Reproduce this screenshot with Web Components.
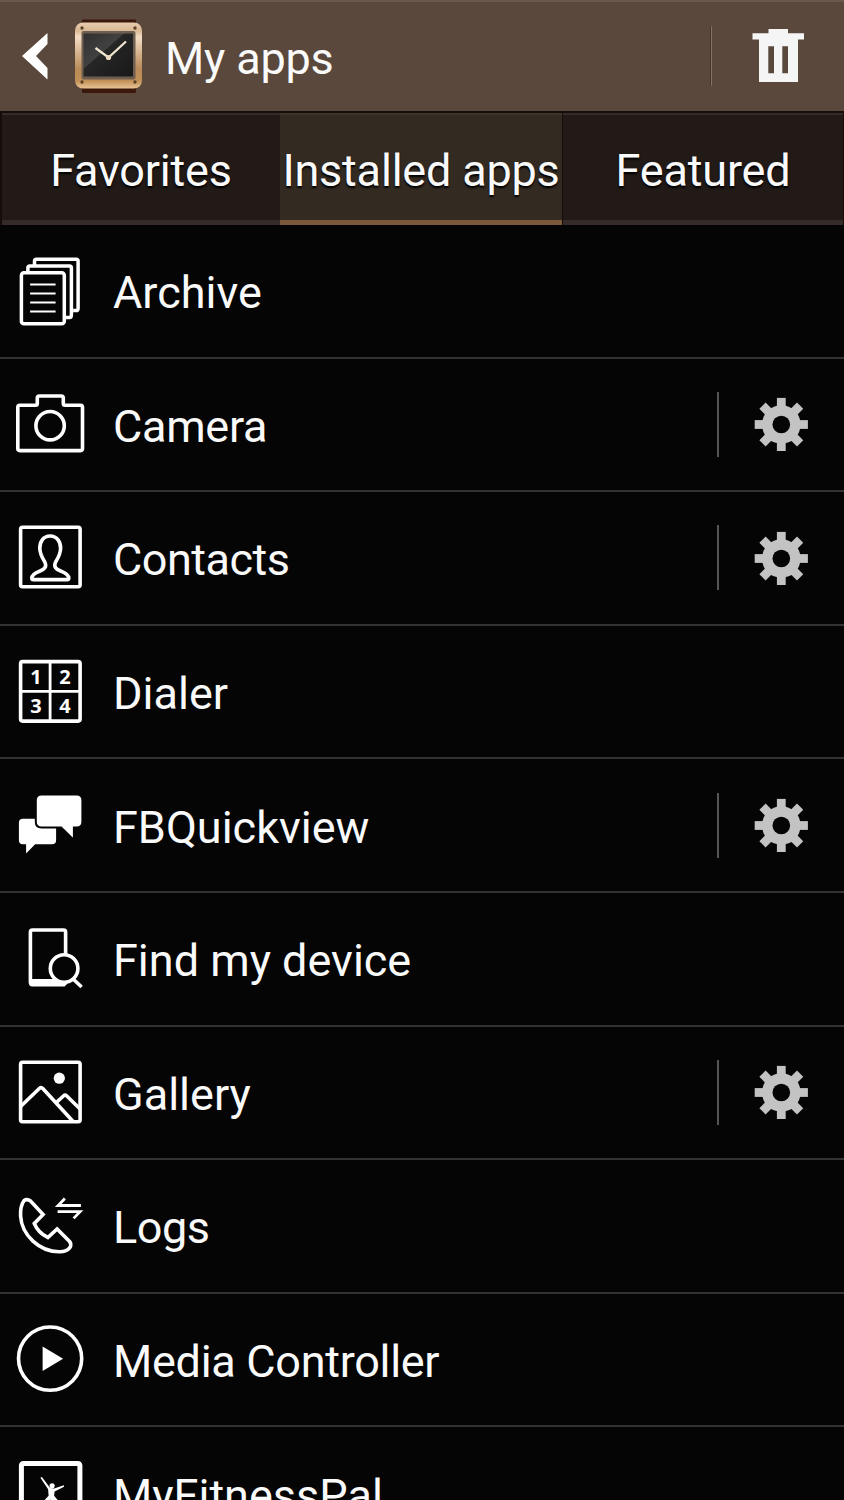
<!DOCTYPE html>
<html lang="en">
<head>
<meta charset="utf-8">
<title>My apps</title>
<style>
html, body {
    margin: 0;
    height: 1500px;
    overflow: hidden;
    background: #050505;
}
</style>
</head>
<body>
<my-apps></my-apps>

<script>
// every icon is drawn on the 100x134 cell at the start of its row
const ICONS = {
    archive: `
        <g stroke-width="3.500">
            <path d="M34.900 43v-5.800q0-2 2-2h39.600q2 0 2 2v47q0 2.400-2 2.400h-3"/>
            <path d="M28.300 50v-6q0-2 2-2h39.500q2 0 2 2v47q0 2.500-2 2.500h-4"/>
            <rect x="21.800" y="48.800" width="42.900" height="51" rx="2.500"/>
        </g>
        <path stroke-width="2" d="M30.500 60.500H56M30.500 69.500H56M30.500 78.500H56M30.500 87.500H56"/>`,
    camera: `
        <path d="M20.200 47.200H36q1.700 0 1.700-1.700v-5.500q0-2 2-2h22q2 0 2 2v5.500q0 1.700 1.700 1.700h15.500q2 0 2 2v41.400q0 2-2 2H20.200q-2 0-2-2V49.200q0-2 2-2z"/>
        <circle cx="50.500" cy="67.700" r="14.200"/>`,
    contacts: `
        <rect x="21" y="36.300" width="59.500" height="59.500" rx="2"/>
        <path d="M50.500 45c-7 0-10.500 6-10.300 12.500.200 6 2.700 9.500 5 13.500 2.500 5-.700 7.500-4.700 9-4 1.500-8.500 3.500-8.300 7.300q.100 1.300 1.500 1.300h34q1.500 0 1.500-1.300c0-3.800-4.200-5.800-8.200-7.300-4-1.500-7.500-4-5-9 2.300-4 4.800-7.500 5-13.500C61.200 51 57.500 45 50.500 45z"/>`,
    dialer: `
        <rect x="21" y="36.600" width="59.500" height="59.500" rx="2"/>
        <path stroke-width="2.800" d="M50.500 37v59M21 66.300h59"/>
        <g class="digits">
            <text x="36.500" y="59">1</text>
            <text x="65.500" y="59">2</text>
            <text x="36.500" y="88.500">3</text>
            <text x="65.500" y="88.500">4</text>
        </g>`,
    chat: `
        <g fill="#fff" stroke="none">
            <path d="M23.300 60.800h29.200q4 0 4 4v17.400q0 4-4 4H35.500l-9 9.200v-9.200h-3.200q-4 0-4-4V64.800q0-4 4-4z"/>
            <path stroke="#050505" stroke-width="2" d="M42 36.500h35q5.800 0 5.800 5.800v21.500q0 5.800-5.800 5.800h-2.700V82L61.500 69.600H42q-5.800 0-5.800-5.800V42.300q0-5.800 5.800-5.800z"/>
        </g>`,
    find: `
        <rect x="30.800" y="38" width="35.200" height="54" rx="2"/>
        <path fill="#fff" stroke="none" d="M29.500 87H68v3l-3 4.500H32.500q-3 0-3-3z"/>
        <circle fill="#050505" cx="64.500" cy="76.500" r="13.800"/>
        <path stroke-width="3.600" d="M73.500 87l8.500 8"/>`,
    gallery: `
        <rect x="21" y="36.300" width="59.500" height="59.500" rx="2"/>
        <circle fill="#fff" stroke="none" cx="59.700" cy="52.200" r="5.600"/>
        <path d="M21 80.500l18.700-18q1.800-1.700 3.500.1L73.500 95.500M57.300 76l6.500-6q1.700-1.600 3.400 0L80.500 83"/>`,
    logs: `
        <path d="M24.500 41.500q3-2 6.500.5L43.500 55.500 34.700 64.500q4 9.500 13.500 14L57.500 70 70 82.500q2.500 3 0 6.500-4 4-10 3.800C40 93 22 76 21 57q-.5-10 3.500-15.500z"/>
        <path stroke-width="2.800" d="M81.300 46.500H58.500l6.800-7M58 52.600H80.500l-6.500 6.800"/>`,
    media: `
        <circle cx="50.500" cy="65.600" r="31.600"/>
        <path fill="#fff" stroke="none" d="M43 53.500l20.500 12.200L43 78z"/>`,
    fitness: `
        <rect x="21.800" y="37.500" width="58.500" height="58.500" rx="2" stroke-width="5"/>
        <circle fill="#fff" stroke="none" cx="52.500" cy="59.800" r="2.600"/>
        <path fill="#fff" stroke="none" d="M42.300 51l8.200 11 4 .5 9.700-3.200.3 1.500-9.500 4.700-.500 4.200 5 6-9-2-7 2 5.500-6-.500-6.500-7.700-11.500z"/>`,
}

// tooth boxes rotated around the hub
const GEAR = [0, 45, 90, 135].map(a =>
    `<rect x="-4.400" y="-26.600" width="8.800" height="53.200" transform="rotate(${a})"/>`
).join('')

class AppHeader extends HTMLElement {
    constructor() {
        super()
        this.attachShadow({ mode: 'open' })
    }

    connectedCallback() {
        this.shadowRoot.innerHTML = /* html */ `
            <svg class="back" width="76" height="111" viewBox="0 0 76 111">
                <path d="M47.500 33v11L36 56l11.500 12v11.500L22 56z" fill="#fff"/>
            </svg>
            <svg class="watch" width="68" height="76" viewBox="75 19 68 76">
                <defs>
                    <linearGradient id="gold" x2="0" y2="1">
                        <stop offset="0" stop-color="#e9cdb0"/>
                        <stop offset=".12" stop-color="#d9b893"/>
                        <stop offset=".22" stop-color="#f3dcc5"/>
                        <stop offset=".7" stop-color="#b98b59"/>
                        <stop offset=".88" stop-color="#c19057"/>
                        <stop offset="1" stop-color="#e8c396"/>
                    </linearGradient>
                    <linearGradient id="face" x2="1" y2="1">
                        <stop offset="0" stop-color="#303030"/>
                        <stop offset=".4" stop-color="#414141"/>
                        <stop offset=".42" stop-color="#262626"/>
                        <stop offset="1" stop-color="#181818"/>
                    </linearGradient>
                </defs>
                <rect x="82" y="20.500" width="54" height="73.500" rx="1" fill="#3b180c"/>
                <rect x="75" y="23.500" width="67" height="66" rx="8" fill="url(#gold)"/>
                <rect x="81.500" y="32" width="54" height="48.500" rx="2" fill="#6e5e50"/>
                <rect x="83.500" y="34.500" width="49.500" height="43" rx="1" fill="url(#face)"/>
                <g fill="#5b4128">
                    <circle cx="82" cy="29" r="1.700"/><circle cx="135" cy="29" r="1.700"/>
                    <circle cx="82" cy="83" r="1.700"/><circle cx="135" cy="83" r="1.700"/>
                </g>
                <path d="M95.500 49l13 9.500L126 42.500" fill="none" stroke="#f1e6d1" stroke-width="2.300"/>
                <circle cx="108.500" cy="58.500" r="2.600" fill="#e8d8bf"/>
            </svg>
            <h1><slot></slot></h1>
            <i></i>
            <svg width="132" height="111" viewBox="712 0 132 111">
                <path fill="#f5f5f5" fill-rule="evenodd" d="M768.500 29H788v4.300h16v6.200h-6V82h-39V39.500h-6.500v-6.200h16zM768.300 46.300v27h5.700v-27zM782.300 46.300v27h5.700v-27z"/>
            </svg>
            <style>
            :host {
                display: flex;
                box-sizing: border-box;
                height: 111px;
                align-items: center;
                background: linear-gradient(#6c594c 2px, #5a483c 2px);
            }

            svg {
                display: block;
                flex: none;
            }

            .back {
                margin-right: -1px;
            }

            h1 {
                flex: 1;
                margin: 5px 0 0 22px;
                font-size: 45px;
                font-weight: 400;
                line-height: 53px;
                letter-spacing: -0.2px;
            }

            i {
                width: 1px;
                height: 60px;
                background: #83756a;
                box-shadow: -1px 0 #483529;
            }
            </style>
        `
    }
}

class AppTab extends HTMLElement {
    constructor() {
        super()
        this.attachShadow({ mode: 'open' })
    }

    connectedCallback() {
        this.shadowRoot.innerHTML = /* html */ `
            <span><slot></slot></span>
            <style>
            :host {
                display: flex;
                box-sizing: border-box;
                justify-content: center;
                border-top: 2px solid #342b28;
                border-bottom: 5px solid #352c29;
                background: #211a17;
                font-size: 45px;
                line-height: 53px;
                letter-spacing: -0.2px;
                text-shadow: 0 2px 2px #000;
            }

            :host([selected]) {
                margin-right: 1px;
                border-top-color: #3d342a;
                border-bottom-color: #7b5a3a;
                background: #332a22;
            }

            span {
                margin-top: 29px;
                white-space: nowrap;
            }
            </style>
        `
    }
}

class AppRow extends HTMLElement {
    constructor() {
        super()
        this.attachShadow({ mode: 'open' })
    }

    connectedCallback() {
        const settings = this.hasAttribute('settings') ? `
            <i></i>
            <svg width="125" height="54" viewBox="-62.300 -27.500 125 54">
                <g fill="#c3c3c3">${GEAR}<circle r="19.300"/></g>
                <circle r="8.800" fill="#050505"/>
            </svg>` : ''

        this.shadowRoot.innerHTML = /* html */ `
            <svg class="icon" width="100" height="133.600" viewBox="0.400 1 100 133.600">${ICONS[this.getAttribute('icon')]}</svg>
            <span><slot></slot></span>
            ${settings}
            <style>
            :host {
                display: flex;
                box-sizing: border-box;
                height: 133.6px;
                align-items: center;
                border-bottom: 2px solid #333;
                font-size: 45px;
                line-height: 53px;
            }

            svg {
                display: block;
                flex: none;
            }

            .icon {
                align-self: flex-start;
                fill: none;
                stroke: #fff;
                stroke-width: 3.6;
            }

            .digits {
                fill: #fff;
                stroke: none;
                font: bold 20px "Noto Sans", sans-serif;
                text-anchor: middle;
            }

            span {
                flex: 1;
                margin: 4px 0 0 13px;
                white-space: nowrap;
            }

            i {
                width: 2px;
                height: 65px;
                background: #555;
            }
            </style>
        `
    }
}

class MyApps extends HTMLElement {
    constructor() {
        super()
        this.attachShadow({ mode: 'open' })
    }

    connectedCallback() {
        this.shadowRoot.innerHTML = /* html */ `
            <app-header>My apps</app-header>
            <nav>
                <app-tab>Favorites</app-tab>
                <app-tab selected>Installed apps</app-tab>
                <app-tab>Featured</app-tab>
            </nav>
            <main>
                <app-row icon="archive">Archive</app-row>
                <app-row icon="camera" class="snug" settings>Camera</app-row>
                <app-row icon="contacts" class="tight" settings>Contacts</app-row>
                <app-row icon="dialer">Dialer</app-row>
                <app-row icon="chat" settings>FBQuickview</app-row>
                <app-row icon="find">Find my device</app-row>
                <app-row icon="gallery" settings>Gallery</app-row>
                <app-row icon="logs" class="tight">Logs</app-row>
                <app-row icon="media" class="snug">Media Controller</app-row>
                <app-row icon="fitness">MyFitnessPal</app-row>
            </main>
            <style>
            :host {
                display: block;
                width: 844px;
                height: 1500px;
                overflow: hidden;
                background: #050505;
                color: #fafafa;
                font-family: Roboto, sans-serif;
            }

            nav {
                display: grid;
                box-sizing: border-box;
                grid-template-columns: 278px 283px 280px;
                height: 114px;
                padding: 2px 1px 0 2px;
                background: #160d0a;
            }

            .snug {
                letter-spacing: -0.3px;
            }

            .tight {
                letter-spacing: -0.5px;
            }
            </style>
        `
    }
}

customElements.define('app-header', AppHeader)
customElements.define('app-tab', AppTab)
customElements.define('app-row', AppRow)
customElements.define('my-apps', MyApps)
</script>
</body>
</html>
